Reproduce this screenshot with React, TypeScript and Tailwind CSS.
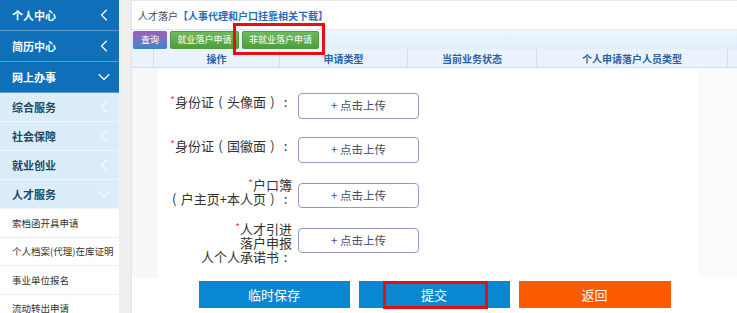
import React from 'react';
import { ChevronLeft, ChevronDown } from 'lucide-react';

const topMenu = [
  { label: '个人中心', open: false },
  { label: '简历中心', open: false },
  { label: '网上办事', open: true },
];

const subMenu = [
  { label: '综合服务', open: false },
  { label: '社会保障', open: false },
  { label: '就业创业', open: false },
  { label: '人才服务', open: true },
];

const links = ['索档函开具申请', '个人档案(代理)在库证明', '事业单位报名', '流动转出申请'];

const punct: Record<string, string> = { '（': '(', '）': ')', '：': ':' };

function Star() {
  return <span className="text-[#f0413b] text-[10px] leading-[10px] align-top">*</span>;
}

// full-width punctuation drawn centred in a 1em box, like the page's original font
function Label({ text }: { text: string }) {
  return (
    <>
      {text.split(/([（）：])/).map((part, i) =>
        punct[part] ? (
          <span key={i} className="inline-block w-[1em] text-center">
            {punct[part]}
          </span>
        ) : (
          <span key={i}>{part}</span>
        ),
      )}
    </>
  );
}

function UploadButton({ tall }: { tall?: boolean }) {
  return (
    <button
      className={`w-[121px] ${tall ? 'h-[26px]' : 'h-[25px]'} shrink-0 rounded-[4px] border border-[#8f9cc6] bg-white text-[11.5px] text-[#44506e] flex items-center justify-center`}
    >
      + 点击上传
    </button>
  );
}

function App() {
  return (
    <div
      className="flex w-[737px] h-[313px] overflow-hidden bg-white text-[#333]"
      style={{ fontFamily: '"Noto Sans CJK SC", "Noto Sans", sans-serif' }}
    >
      {/* Sidebar */}
      <div className="w-[119px] shrink-0 flex flex-col bg-white">
        {topMenu.map((m) => (
          <div
            key={m.label}
            className="h-[31px] shrink-0 flex items-center justify-between pl-[12px] pr-[5px] bg-[#0f6fb9] border-b border-[#5b9bd2] text-white text-[11px] font-bold"
          >
            <span>{m.label}</span>
            {m.open ? (
              <ChevronDown size={20} strokeWidth={1.4} />
            ) : (
              <ChevronLeft size={20} strokeWidth={1.4} />
            )}
          </div>
        ))}
        {subMenu.map((m) => (
          <div
            key={m.label}
            className="h-[29px] shrink-0 flex items-center justify-between pl-[12px] pr-[5px] bg-[#dcedfa] border-b border-[#eef6fd] text-[#1d4a66] text-[11px] font-bold"
          >
            <span>{m.label}</span>
            {m.open ? (
              <ChevronDown size={20} strokeWidth={1.4} className="text-[#f4f9fe]" />
            ) : (
              <ChevronLeft size={20} strokeWidth={1.4} className="text-[#f4f9fe]" />
            )}
          </div>
        ))}
        {links.map((l) => (
          <div
            key={l}
            className="h-[28.5px] shrink-0 flex items-center pl-[12px] border-b border-[#ececec] text-[9.5px] text-[#333] whitespace-nowrap"
          >
            {l}
          </div>
        ))}
      </div>

      {/* Gutter */}
      <div className="w-[13px] shrink-0 bg-[#efefef] border-r border-[#e3e3e3]" />

      {/* Main */}
      <div className="flex-1 flex flex-col min-w-0">
        <div className="h-[30px] shrink-0 flex items-center pl-[6px] border-t border-[#e8e8e8] border-b border-[#d9d9d9] text-[10px]">
          <span className="text-[#444]">人才落户</span>
          <span className="text-[#1f6fb8] font-bold">【人事代理和户口挂靠相关下载】</span>
        </div>

        {/* Toolbar */}
        <div className="h-[19px] shrink-0 flex items-start gap-[3px] pl-[1px] pt-[1px] bg-gradient-to-b from-[#eef6fd] to-[#dfeefb]">
          <button className="w-[34px] h-[18px] rounded-[2px] bg-gradient-to-b from-[#9b5cb6] to-[#2f86c9] text-white text-[9px] flex items-center justify-center">
            查询
          </button>
          <button className="w-[69px] h-[18px] rounded-[2px] border border-[#4f9a40] bg-gradient-to-b from-[#6fb95b] to-[#4f9f3e] text-white text-[9px] flex items-center justify-center">
            就业落户申请
          </button>
          <div className="relative">
            <button className="w-[77px] h-[18px] rounded-[2px] border border-[#4f9a40] bg-gradient-to-b from-[#6fb95b] to-[#4f9f3e] text-white text-[9px] flex items-center justify-center">
              非就业落户申请
            </button>
            <div className="absolute -left-[9px] -right-[6px] -top-[8px] -bottom-[6px] border-[3px] border-[#ea0d0d]" />
          </div>
        </div>

        {/* Table header */}
        <div className="h-[19px] shrink-0 flex bg-[#eaf3fc] border-b border-[#d3e0ec] text-[10px] font-bold text-[#2c62a3]">
          <div className="w-[22px] border-r border-[#d3e0ec]" />
          <div className="w-[126px] border-r border-[#d3e0ec] flex items-center justify-center">操作</div>
          <div className="w-[128px] border-r border-[#d3e0ec] flex items-center justify-center">申请类型</div>
          <div className="w-[129px] border-r border-[#d3e0ec] flex items-center justify-center">当前业务状态</div>
          <div className="w-[191px] border-r border-[#d3e0ec] flex items-center justify-center">个人申请落户人员类型</div>
          <div className="flex-1" />
        </div>

        {/* Form */}
        <div className="h-[210px] shrink-0 flex">
          <div className="w-[26px] shrink-0 bg-[#f7f9f9]" />
          <div className="flex-1 flex flex-col pt-[25px] text-[13px] text-[#333]">
            <div className="flex items-start gap-[6px]">
              <div className="w-[134px] shrink-0 text-right leading-[14px] mt-[2px] whitespace-nowrap">
                <Star /><Label text="身份证（头像面）：" />
              </div>
              <UploadButton tall />
            </div>
            <div className="flex items-start gap-[6px] mt-[18px]">
              <div className="w-[134px] shrink-0 text-right leading-[14px] mt-[2px] whitespace-nowrap">
                <Star /><Label text="身份证（国徽面）：" />
              </div>
              <UploadButton tall />
            </div>
            <div className="flex items-start gap-[6px] mt-[20px]">
              <div className="w-[134px] shrink-0 text-right leading-[14px] -mt-[5px] whitespace-nowrap">
                <div><Star />户口簿</div>
                <div><Label text="（户主页+本人页）：" /></div>
              </div>
              <UploadButton />
            </div>
            <div className="flex items-start gap-[6px] mt-[20px]">
              <div className="w-[134px] shrink-0 text-right leading-[14px] -mt-[6px] whitespace-nowrap">
                <div><Star />人才引进</div>
                <div>落户申报</div>
                <div><Label text="人个人承诺书：" /></div>
              </div>
              <UploadButton />
            </div>
          </div>
          <div className="w-[39px] shrink-0 bg-[#fafcfc]" />
        </div>

        {/* Actions */}
        <div className="flex justify-center gap-[9px] pt-[3px]">
          <button className="w-[151px] h-[27px] bg-[#0a87d1] text-white text-[13px] flex items-center justify-center">
            临时保存
          </button>
          <div className="relative">
            <button className="w-[151px] h-[27px] bg-[#0a87d1] text-white text-[13px] flex items-center justify-center">
              提交
            </button>
            <div className="absolute left-[24px] right-[22px] top-0 -bottom-[1px] border-[3px] border-[#ea0d0d]" />
          </div>
          <button className="w-[152px] h-[27px] bg-[#fb5a00] text-white text-[13px] flex items-center justify-center">
            返回
          </button>
        </div>
      </div>
    </div>
  );
}

export default App;
